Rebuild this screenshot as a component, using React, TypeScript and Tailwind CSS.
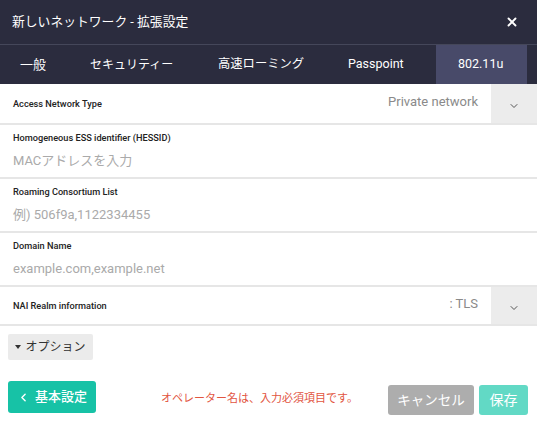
import { ChevronDown, ChevronLeft, X } from "lucide-react";

const font = "font-['Roboto','Noto_Sans_CJK_JP',sans-serif]";

const tabs = [
  { name: "一般", cls: "w-[68px] pl-[20px] text-[13px]" },
  { name: "セキュリティー", cls: "w-[129px] pl-[22px] text-[12px]" },
  { name: "高速ローミング", cls: "w-[129px] pl-[21px] text-[12.3px]" },
  { name: "Passpoint", cls: "w-[110px] pl-[22px] text-[12.5px]" },
  { name: "802.11u", cls: "w-[91px] pl-[22px] text-[12.5px] bg-[#484a69]" },
];

function SelectRow({ label, value, h }: { label: string; value: string; h: string }) {
  return (
    <div className={`flex ${h} border-b-2 border-[#e6e6e6]`}>
      <div className="flex flex-1 items-center justify-between pl-[13px] pr-[13px]">
        <span className="text-[9.2px] font-medium text-[#222]">{label}</span>
        <span className="-mt-[4px] text-[13px] text-[#8a8a8a]">{value}</span>
      </div>
      <div className="flex w-[46px] items-center justify-center bg-[#ececec] pt-[5px]">
        <ChevronDown className="h-[12px] w-[12px] text-[#555]" strokeWidth={2} />
      </div>
    </div>
  );
}

function InputRow({ label, placeholder }: { label: string; placeholder: string }) {
  return (
    <div className="flex h-[54px] flex-col border-b-2 border-[#e6e6e6] pl-[13px] pt-[6px]">
      <span className="text-[9.2px] font-medium text-[#222]">{label}</span>
      <span className="mt-[6px] text-[13px] text-[#aaa]">{placeholder}</span>
    </div>
  );
}

export default function App() {
  return (
    <div className={`${font} flex h-[422px] w-[537px] flex-col bg-white`}>
      <div className="flex h-[45px] items-center justify-between border-b border-[#45475a] bg-[#2b2c3e] pl-[12px] pr-[18px]">
        <span className="text-[12.8px] text-white">新しいネットワーク - 拡張設定</span>
        <X className="h-[14px] w-[14px] text-white" strokeWidth={3.2} />
      </div>
      <div className="flex h-[39px] bg-[#2b2c3e]">
        {tabs.map((t) => (
          <div key={t.name} className={`flex h-full items-center text-white ${t.cls}`}>
            {t.name}
          </div>
        ))}
      </div>

      <SelectRow label="Access Network Type" value="Private network" h="h-[41px]" />
      <InputRow label="Homogeneous ESS identifier (HESSID)" placeholder="MACアドレスを入力" />
      <InputRow label="Roaming Consortium List" placeholder="例) 506f9a,1122334455" />
      <InputRow label="Domain Name" placeholder="example.com,example.net" />
      <SelectRow label="NAI Realm information" value=": TLS" h="h-[39px]" />

      <div className="px-[8px] pt-[8px]">
        <button className="flex h-[26px] w-[85px] items-center justify-center gap-[4px] rounded-[2px] bg-[#ebebeb] text-[12px] text-[#333]">
          <span className="h-0 w-0 border-x-[3px] border-t-[4px] border-x-transparent border-t-[#333]" />
          オプション
        </button>
      </div>

      <div className="flex items-center px-[8px] pt-[19px]">
        <button className="flex h-[32px] w-[88px] items-center justify-center gap-[5px] rounded-[3px] bg-[#17c2a6] text-[13px] font-medium text-white">
          <ChevronLeft className="h-[13px] w-[13px]" strokeWidth={2.6} />
          基本設定
        </button>
        <span className="ml-auto mr-[30px] mt-[4px] text-[11px] text-[#e2553f]">
          オペレーター名は、入力必須項目です。
        </span>
        <button className="mt-[6px] h-[30px] w-[86px] rounded-[3px] bg-[#adadad] text-[13.5px] text-white">
          キャンセル
        </button>
        <button className="ml-[5px] mr-[1px] mt-[6px] h-[30px] w-[49px] rounded-[3px] bg-[#62d9c5] text-[14px] text-white">
          保存
        </button>
      </div>
    </div>
  );
}
